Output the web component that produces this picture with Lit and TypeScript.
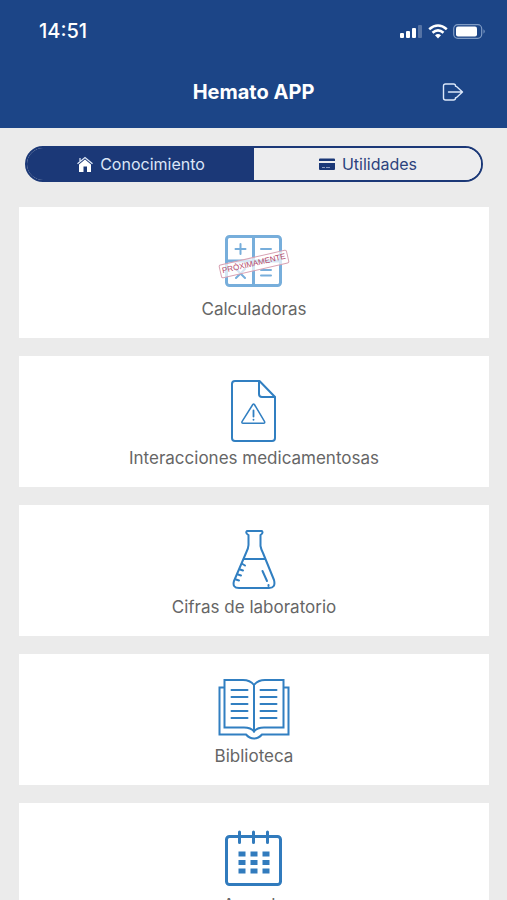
import { LitElement, html, svg, css, TemplateResult } from "lit";
import { customElement, state } from "lit/decorators.js";

const calculator = svg`
  <g fill="none" stroke="#77aedb" stroke-width="3" stroke-linecap="round">
    <rect x="9.5" y="9.5" width="54" height="49" rx="3"/>
    <path d="M36.500 9.500V58.500M9.500 34H63.500" stroke-linecap="butt"/>
    <path stroke-width="2" d="M18.500 22H28.500M23.500 17V27M44 22H54M44 43H54M44 48.500H54M19 51L28 42M19 42L28 51"/>
  </g>`;

const file = svg`
  <g fill="none" stroke="#317fc1" stroke-width="2" stroke-linejoin="round" stroke-linecap="round">
    <path d="M42.500 5H18a3 3 0 0 0-3 3V62a3 3 0 0 0 3 3H55a3 3 0 0 0 3-3V21Z"/>
    <path d="M42 5.500V18a3 3 0 0 0 3 3H57.500"/>
    <path stroke-width="1.500" d="M35.800 28.500q.8-1 1.600 0L47.600 45.600q.5 1.700-1 1.700H26q-1.500 0-1-1.700Z"/>
    <path stroke-width="1.800" d="M36.500 34.500V40.500M36.500 43.600V43.800"/>
  </g>`;

const flask = svg`
  <g fill="none" stroke="#317fc1" stroke-width="2" stroke-linejoin="round" stroke-linecap="round">
    <path d="M30 6H45Q46.500 8 43.500 10V21Q44 24 46 28L57 55Q59 63 52 63H22Q15 63 17 56L29 28Q31.500 23 31.500 20V10Q28 8 30 6Z"/>
    <path d="M27 34H48"/>
    <path stroke-width="2" d="M25.500 39L28 40.500M23 44.500L26 45.500M21 49.500L24 50.500M19 54.500L22 55.500"/>
    <path stroke-width="2" d="M45.500 46L50 56M51.500 60V61"/>
  </g>`;

const book = svg`
  <g fill="none" stroke="#317fc1" stroke-width="2" stroke-linejoin="miter" stroke-linecap="round">
    <path d="M37 11Q33 6 26 6H7.500V53.500H27Q34 53.500 37 57.500Q40 53.500 47 53.500H66.500V6H48Q41 6 37 11Z"/>
    <path d="M37 11V57.500"/>
    <path d="M6.500 13.500H2.500V60.500H29Q32.500 64.500 37 64.500Q41.500 64.500 45 60.500H71.500V13.500H67.500"/>
    <path d="M14.500 16H30.500M14.500 23H30.500M14.500 30H30.500M14.500 37H30.500M14.500 44H30.500M43.500 16H59.500M43.500 23H59.500M43.500 30H59.500M43.500 37H59.500M43.500 44H59.500"/>
  </g>`;

const calendar = svg`
  <g fill="none" stroke="#317bbd" stroke-width="3" stroke-linecap="round">
    <rect x="9.500" y="13.500" width="54" height="48" rx="3"/>
    <path d="M22.500 9V19.500M36.500 9V19.500M50.500 9V19.500"/>
    <path stroke-width="5" stroke-linecap="butt" stroke-dasharray="7 5" d="M21.500 31H53M21.500 39.500H53M21.500 48H53"/>
  </g>`;

interface Topic {
  label: string;
  icon: TemplateResult;
  soon?: boolean;
}

const topics: Topic[] = [
  { label: "Calculadoras", icon: calculator, soon: true },
  { label: "Interacciones medicamentosas", icon: file },
  { label: "Cifras de laboratorio", icon: flask },
  { label: "Biblioteca", icon: book },
  { label: "Agenda", icon: calendar },
];

@customElement("status-bar")
class StatusBar extends LitElement {
  static styles = css`
    :host {
      display: flex;
      justify-content: space-between;
      align-items: center;
      height: 62px;
      padding: 0 20px 0 39px;
      font-size: 20px;
      font-weight: 500;
    }
    svg {
      display: block;
    }
  `;

  render() {
    return html`
      <time>14:51</time>
      <svg width="88" height="20" viewBox="0 0 88 20" fill="#fff" aria-hidden="true">
        <rect x="1" y="12" width="4" height="5" rx="1"/>
        <rect x="7" y="10" width="4" height="7" rx="1"/>
        <rect x="13" y="7" width="4" height="10" rx="1"/>
        <rect x="19" y="4" width="4" height="13" rx="1" opacity=".25"/>
        <g fill="none" stroke="#fff" stroke-width="2.600">
          <path d="M30.200 8.200Q39 .800 47.800 8.200"/>
          <path d="M33.500 11.800Q39 7 44.500 11.800"/>
        </g>
        <path d="M36 14.200Q39 12 42 14.200L39 17.500Z"/>
        <rect x="54.700" y="3.700" width="28" height="13.600" rx="4" fill="none" stroke="#7f9bc4" stroke-width="1.200"/>
        <rect x="57" y="5.500" width="21" height="10" rx="2"/>
        <path d="M84.500 8.300Q87 10.500 84.500 12.700Z" fill="#7f9bc4"/>
      </svg>
    `;
  }
}

@customElement("topic-card")
class TopicCard extends LitElement {
  static properties = { topic: { attribute: false } };
  declare topic: Topic;

  static styles = css`
    :host {
      display: block;
    }
    .card {
      display: flex;
      flex-direction: column;
      align-items: center;
      width: 100%;
      padding: 20px 0 17px;
      border: 0;
      background: #fff;
      color: #666;
      font: 17px/24px Inter, "Liberation Sans", sans-serif;
      cursor: pointer;
    }
    .picture {
      position: relative;
      display: block;
      height: 70px;
    }
    .picture svg {
      display: block;
    }
    .stamp {
      position: absolute;
      top: 30px;
      left: 2px;
      width: 68px;
      border: 1px solid #d8a3b4;
      border-radius: 2px;
      background: #ffffffb3;
      color: #b4496a;
      font-family: "Liberation Sans", sans-serif;
      font-size: 8px;
      line-height: 12px;
      text-align: center;
      transform: rotate(-13deg);
    }
  `;

  render() {
    return html`
      <button class="card" type="button">
        <span class="picture">
          <svg width="74" height="70" viewBox="0 0 74 70" aria-hidden="true">${this.topic.icon}</svg>
          ${this.topic.soon ? html`<span class="stamp">PRÓXIMAMENTE</span>` : null}
        </span>
        <span>${this.topic.label}</span>
      </button>
    `;
  }
}

@customElement("app-root")
class AppRoot extends LitElement {
  @state() private section = "conocimiento";

  static styles = css`
    :host {
      display: flex;
      flex-direction: column;
      height: 100vh;
      background: #ebebeb;
      font-family: Inter, "Liberation Sans", sans-serif;
    }
    .top {
      flex: none;
      background: #1c4587;
      color: #fff;
    }
    .bar {
      display: grid;
      grid-template-columns: 1fr auto 1fr;
      align-items: center;
      height: 66px;
      padding: 0 43px 6px;
      box-sizing: border-box;
    }
    h1 {
      grid-column: 2;
      margin: 0;
      font-size: 20px;
      line-height: 28px;
      font-weight: 700;
    }
    .exit {
      justify-self: end;
      padding: 0;
      border: 0;
      background: none;
      cursor: pointer;
    }
    .exit svg {
      display: block;
    }
    main {
      flex: 1;
      min-height: 0;
      overflow-y: auto;
      scrollbar-width: none;
    }
    .tabs {
      display: grid;
      grid-template-columns: 1fr 1fr;
      margin: 18px 24px 25px 25px;
      border: 2px solid #1b3877;
      border-radius: 18px;
      overflow: hidden;
    }
    .tab {
      display: flex;
      justify-content: center;
      align-items: center;
      gap: 6px;
      height: 32px;
      padding: 0;
      border: 0;
      background: #ededee;
      color: #2b427d;
      font: 16px/24px Inter, "Liberation Sans", sans-serif;
      cursor: pointer;
    }
    .tab.active {
      background: #1b3877;
      color: #dce6f7;
    }
    .list {
      display: grid;
      gap: 18px;
      padding: 0 18px 18px 19px;
    }
  `;

  private tab(id: string, label: string, icon: TemplateResult) {
    return html`
      <button
        class="tab ${this.section === id ? "active" : ""}"
        type="button"
        role="tab"
        aria-selected=${this.section === id ? "true" : "false"}
        @click=${() => (this.section = id)}
      >
        <svg width="18" height="18" viewBox="0 0 18 18" aria-hidden="true">${icon}</svg>
        <span>${label}</span>
      </button>
    `;
  }

  render() {
    return html`
      <header class="top">
        <status-bar></status-bar>
        <div class="bar">
          <h1>Hemato APP</h1>
          <button class="exit" type="button" aria-label="Salir">
            <svg width="22" height="20" viewBox="0 0 22 20" fill="none" stroke="#dce8fa" stroke-width="1.400" stroke-linecap="round" stroke-linejoin="round">
              <path d="M13.500 4.200V4Q13.500 2 11.500 2H3.500Q1.500 2 1.500 4V16Q1.500 18 3.500 18H11.500Q13.500 18 13.500 16V15.800"/>
              <path d="M6.500 10H20.500M14.500 4.500L20.500 10L14.500 15.500"/>
            </svg>
          </button>
        </div>
      </header>
      <main>
        <div class="tabs" role="tablist">
          ${this.tab("conocimiento", "Conocimiento", svg`
            <path fill="#fff" d="M9 4.500L15 9.500V17H11V11.500H7.500V17H3V9.500Z"/>
            <path fill="none" stroke="#dce6f7" stroke-width="1.300" d="M1.500 8.800L9 2.500L16.500 8.800M4 6V3"/>`)}
          ${this.tab("utilidades", "Utilidades", svg`
            <path fill="#1b3877" d="M2 3.500H16a1 1 0 0 1 1 1V6H1V4.500a1 1 0 0 1 1-1ZM1 8H17V14a1 1 0 0 1-1 1H2a1 1 0 0 1-1-1Z"/>
            <path stroke="#8c9bc0" d="M4 12.500H7M8 12.500H12"/>`)}
        </div>
        <div class="list">
          ${topics.map((topic) => html`<topic-card .topic=${topic}></topic-card>`)}
        </div>
      </main>
    `;
  }
}
